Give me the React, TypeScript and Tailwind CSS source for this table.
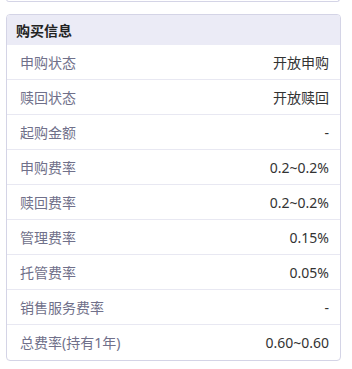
const rows: [string, string][] = [
  ["申购状态", "开放申购"],
  ["赎回状态", "开放赎回"],
  ["起购金额", "-"],
  ["申购费率", "0.2~0.2%"],
  ["赎回费率", "0.2~0.2%"],
  ["管理费率", "0.15%"],
  ["托管费率", "0.05%"],
  ["销售服务费率", "-"],
  ["总费率(持有1年)", "0.60~0.60"],
]

export default function App() {
  return (
    <div
      className="w-[352px] h-[369px] bg-white overflow-hidden"
      style={{ fontFamily: '"Noto Sans", "Noto Sans CJK SC", sans-serif' }}
    >
      {/* previous card, only its bottom edge shows */}
      <div className="ml-[6px] w-[334px] h-[3px] -mt-[1px] border-x border-b border-[#d4d4e6] rounded-b-[4px]" />

      <div className="ml-[6px] mt-[12px] w-[335px] border border-[#d4d4e6] rounded-[4px] overflow-hidden">
        <div className="h-[30px] bg-[#ebebf6] flex items-center pl-[9px] text-[14px] font-bold text-[#222]">
          购买信息
        </div>
        {rows.map(([label, value], i) => (
          <div
            key={label}
            className={`h-[35px] flex items-center justify-between pl-[13px] pr-[11px] text-[14px] ${
              i < rows.length - 1 ? "border-b border-[#e8e8f2]" : ""
            }`}
          >
            <span className="text-[#70708a]">{label}</span>
            <span className="text-[#333]">{value}</span>
          </div>
        ))}
      </div>
    </div>
  )
}
